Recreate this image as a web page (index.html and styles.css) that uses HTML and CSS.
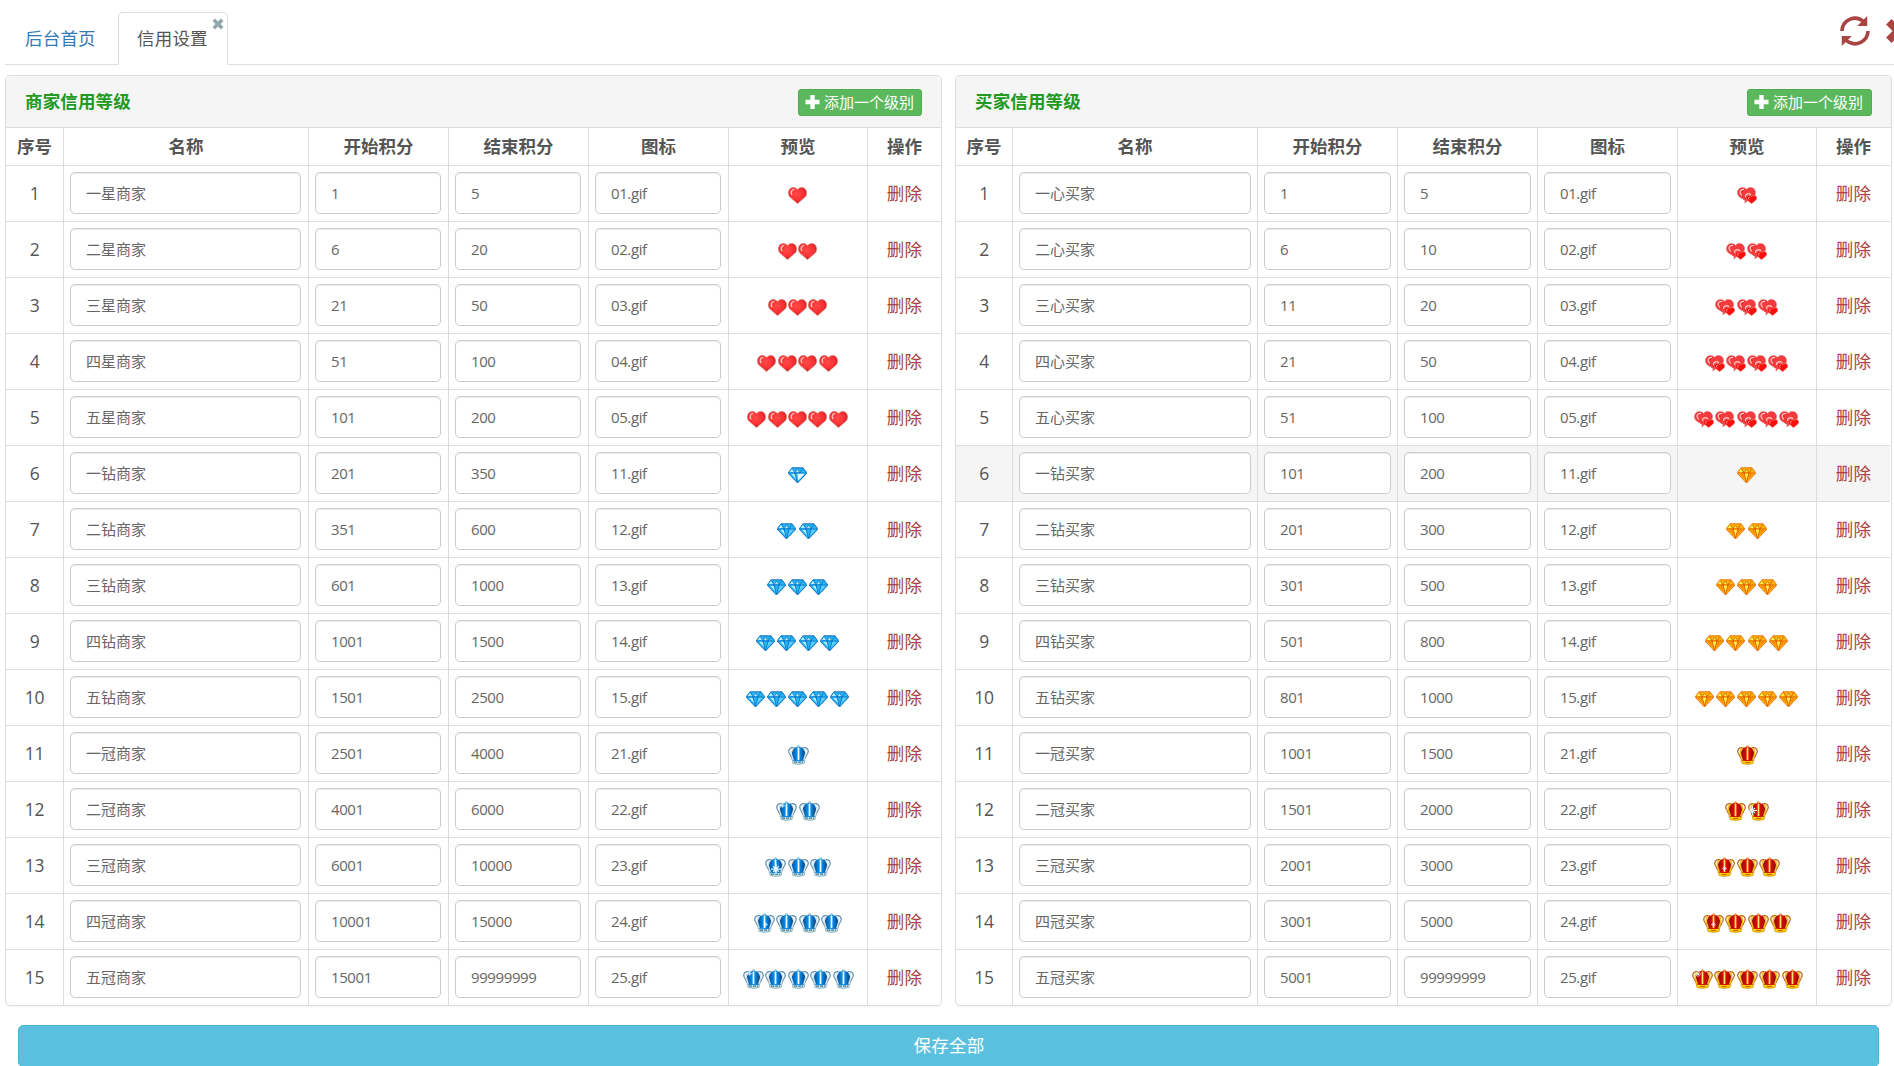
FILE: index.html
```html
<!DOCTYPE html>
<html lang="zh-CN">
<head>
<meta charset="utf-8">
<title>信用设置</title>
<link rel="stylesheet" href="styles.css">
</head>
<body>
<svg class="sprites" aria-hidden="true">
  <defs>
    <radialGradient id="heartFill" cx=".45" cy=".4" r=".6"><stop offset="0" stop-color="#ff4a4a"/><stop offset=".65" stop-color="#fa3131"/><stop offset="1" stop-color="#c81e22"/></radialGradient>
    <linearGradient id="blueBand" x1="0" x2="1" y1="0" y2="0"><stop offset="0" stop-color="#054d92"/><stop offset=".5" stop-color="#0c9fff"/><stop offset="1" stop-color="#033f80"/></linearGradient>
    <linearGradient id="redBand" x1="0" x2="1" y1="0" y2="0"><stop offset="0" stop-color="#8f0600"/><stop offset=".5" stop-color="#e8120c"/><stop offset="1" stop-color="#930500"/></linearGradient>
    <symbol id="heart" viewBox="0 0 19 17">
      <path d="M9.500 16.500 2 10C-.8 7 .3 1 5 .6c2.200-.1 3.700.9 4.500 2.300C10.300 1.500 11.800.5 14 .6c4.700.4 5.800 6.400 3 9.400z" fill="url(#heartFill)" stroke="#d96a66" stroke-width=".7"/>
      <path d="M5.800 2.600C3.400 2.700 2.600 5.300 3.700 7.600" fill="none" stroke="#ffc9c2" stroke-width="1.400" stroke-linecap="round"/>
    </symbol>
    <symbol id="hearts" viewBox="0 0 20 17">
      <path d="M9.500 14.500 2 9.500C-.8 6.500.3 1 5 .6c2-.1 3.800.9 4.600 2C10.500 1 12 .4 14 .6c4.500.4 5.600 5.400 3.500 8.400z" fill="#f33a3c" stroke="#e06060" stroke-width=".5"/>
      <path d="M6.500 2.400C3 2.400 1.900 5.500 4.400 8M8.500 9.500c0-3 3.500-3.400 5.200-1.900" fill="none" stroke="#ffd0cc" stroke-width="1.200" stroke-linecap="round"/>
      <path d="M14.600 16.800 10.200 13c-1.900-2.100-.1-5 2.300-4.500 1 .2 1.700.8 2.100 1.500.5-.8 1.400-1.500 2.500-1.500 2.600 0 3.500 2.700 1.900 4.500z" fill="#fa0d0d" stroke="#ff9c98" stroke-width=".4"/>
      <path d="M12.700 10.200c-1.400 0-1.500 1.500-.7 2.300" fill="none" stroke="#ffd0cc" stroke-width=".8"/>
      <path d="m8 15.800.6-1.500" stroke="#e83030" stroke-width="1.200"/>
    </symbol>
    <symbol id="blueDiamond" viewBox="0 0 19 17">
      <path d="M4 .8h11L18.500 5.500v1L9.500 16 .5 6.500v-1z" fill="#27b4f8" stroke="#1674bd" stroke-width="1"/>
      <path d="M4 1.700 6.500 5H1.800zM9.500 1.700 11.700 5H7.300zM3 6.800h3.500l2 5.700z" fill="#b9f0ff"/>
      <path d="M12.800 6.800h3.700L10.800 12.800z" fill="#65d4ff"/>
      <path d="M1 6h17M4.500 1.500l2.500 4.500L9.500 15 12 6l2.500-4.500M7 6l2.500-4L12 6" fill="none" stroke="#0868b8" stroke-width=".7"/>
    </symbol>
    <symbol id="paleDiamond" viewBox="0 0 19 17">
      <use href="#blueDiamond"/>
      <path d="M9.500 6.800h7L10 13.800z" fill="#eefaff"/>
    </symbol>
    <symbol id="goldDiamond" viewBox="0 0 19 17">
      <path d="M4 .8h11L18.500 5.500v1L9.500 16 .5 6.500v-1z" fill="#ffb800" stroke="#e87416" stroke-width="1"/>
      <path d="M4 1.700 6.500 5H1.800zM9.500 1.700 11.700 5H7.300zM7.500 6.800h4l-2 6.500z" fill="#fff04a"/>
      <path d="M2.500 6.800 6.200 7l2.200 6zM16.500 6.800 12.800 7l-2.200 6z" fill="#fb8a08"/>
      <path d="M1 6h17M4.500 1.500l2.500 4.500L9.500 15 12 6l2.500-4.500M7 6l2.500-4L12 6" fill="none" stroke="#cf4308" stroke-width=".7"/>
    </symbol>
    <symbol id="blueCrown" viewBox="0 0 21 20">
      <path d="M4 14.500h13l-1 4q-5.500 1.800-11 0z" fill="#c4dde5" stroke="#6b98aa" stroke-width=".6"/>
      <path d="M5 15.500Q2 8.500 6 3L10.500 1.500 15 3q4 5.500 1 12.500-5.500 1-11 0z" fill="url(#blueBand)"/>
      <path d="M4.300 14 2.500 10.500Q-.6 6.500 1.800 3.700 4 1.800 6.500 3M16.700 14l1.800-3.500q3.100-4 .7-6.800Q17 1.800 14.500 3" fill="none" stroke="#5c8dab" stroke-width="1.200"/>
      <path d="M5.500 3.200Q2.200 5.500 3.800 10.500l1.400 4.500M15.500 3.200q3.300 2.300 1.700 7.300L15.800 15" fill="none" stroke="#d2e5ec" stroke-width="1.400"/>
      <path d="M8.500 2.200 10.500.6l2 1.600" stroke="#7fa9bd" fill="none"/>
      <path d="M10.500 2.500V15" stroke="#f2fcff" stroke-width="1.700"/>
      <path d="M6 17.200h9" stroke="#3b7d9e" stroke-width="1.200" stroke-dasharray="3 1"/>
    </symbol>
    <symbol id="goldCrown" viewBox="0 0 21 20">
      <path d="M4 14.500h13l-1 4q-5.500 1.800-11 0z" fill="#ffd200" stroke="#c07a08" stroke-width=".6"/>
      <path d="M5 15.500Q2 8.500 6 3L10.500 1.500 15 3q4 5.500 1 12.500-5.500 1-11 0z" fill="url(#redBand)"/>
      <path d="M4.300 14 2.500 10.500Q-.6 6.500 1.800 3.700 4 1.800 6.500 3M16.700 14l1.800-3.500q3.100-4 .7-6.800Q17 1.800 14.500 3" fill="none" stroke="#c0600f" stroke-width="1.200"/>
      <path d="M5.500 3.200Q2.200 5.500 3.800 10.500l1.400 4.500M15.500 3.200q3.300 2.300 1.700 7.300L15.800 15" fill="none" stroke="#f7bd18" stroke-width="1.500"/>
      <path d="M8.500 2.200 10.500.6l2 1.600" stroke="#e08a10" fill="none"/>
      <path d="M10.500 2.500V15" stroke="#ffe56b" stroke-width="1.700"/>
      <path d="M8 17.500h5" stroke="#d26a08" stroke-width="1.200"/>
    </symbol>
    <symbol id="sparkle" viewBox="0 0 8 8"><path d="M4 0v8M0 4h8M1.700 1.700l4.600 4.600M6.300 1.700 1.700 6.300" stroke="#e8f6ff" stroke-width="1"/></symbol>
    <symbol id="plus" viewBox="0 0 14 14"><path d="M4.800 0h4.400v4.800H14v4.400H9.200V14H4.800V9.200H0V4.800h4.800z" fill="currentColor"/></symbol>
    <symbol id="cross" viewBox="0 0 12 12"><path d="M3 .5 6 3.500l3-3L11.500 3l-3 3 3 3L9 11.500l-3-3-3 3L.5 9l3-3-3-3z" fill="currentColor"/></symbol>
    <symbol id="refresh" viewBox="0 0 30 30">
      <path d="M2 15A13 13 0 0 1 23.500 5.500M28 15A13 13 0 0 1 6.500 24.500" fill="none" stroke="currentColor" stroke-width="3.600"/>
      <path d="M27.200 0v10H17.200zM1.800 30V20h10z" fill="currentColor"/>
    </symbol>
  </defs>
</svg>
<nav class="tabs">
  <a class="tab">后台首页</a>
  <a class="tab tab-active">信用设置<svg class="tab-close"><use href="#cross"/></svg></a>
  <div class="tools">
    <svg class="tool-refresh"><use href="#refresh"/></svg>
    <svg class="tool-close"><use href="#cross"/></svg>
  </div>
</nav>
<main class="panels">
  <section class="panel">
    <header class="panel-head"><h2>商家信用等级</h2><button class="add"><svg><use href="#plus"/></svg>添加一个级别</button></header>
    <table class="levels" id="seller"></table>
  </section>
  <section class="panel buyer">
    <header class="panel-head"><h2>买家信用等级</h2><button class="add"><svg><use href="#plus"/></svg>添加一个级别</button></header>
    <table class="levels" id="buyer"></table>
  </section>
</main>
<button class="save">保存全部</button>
<script src="app.js"></script>
</body>
</html>
```
FILE: styles.css
```css
* { box-sizing: border-box; }
html, body { overflow: hidden; }
body {
  margin: 0;
  height: 1066px;
  padding: 12px 0 0 5px;
  background: #fff;
  color: #555;
  font: 17.5px/25px "Open Sans", "Noto Sans CJK SC", sans-serif;
}
button, input { font-family: inherit; }
.sprites { position: absolute; width: 0; height: 0; }

.tabs { display: flex; height: 53px; border-bottom: 1px solid #ddd; }
.tab { position: relative; width: 110px; height: 53px; padding: 14px 0 0 20px; color: #337ab7; letter-spacing: .2px; white-space: nowrap; }
.tab-active {
  margin-left: 3px;
  padding: 13px 0 0 18px;
  border: 1px solid #ddd;
  border-bottom-color: #fff;
  border-radius: 5px 5px 0 0;
  background: #fff;
  color: #555;
}
.tab-close { position: absolute; top: 5px; right: 3px; width: 12px; height: 12px; color: #91a5ae; }
.tools { display: flex; flex: none; gap: 15px; margin-left: auto; margin-right: -17px; padding-top: 4px; color: #a94442; }
.tool-refresh { width: 30px; height: 30px; }
.tool-close { width: 26px; height: 26px; margin-top: 2px; }

.panels { display: flex; gap: 13px; margin-top: 10px; }
.panel { width: 937px; flex: none; border: 1px solid #ddd; border-radius: 5px; box-shadow: 0 1px 1px rgba(0,0,0,.05); }
.panel-head {
  display: flex;
  align-items: center;
  justify-content: space-between;
  height: 52px;
  padding: 1px 19px 0 19px;
  border-bottom: 1px solid #ddd;
  border-radius: 4px 4px 0 0;
  background: #f5f5f5;
}
.panel-head h2 { margin: 0 0 1px; color: #229a22; font-size: 17.5px; font-weight: bold; line-height: 25px; letter-spacing: .15px; }
.add {
  display: flex;
  align-items: center;
  gap: 4px;
  width: 124px;
  height: 27px;
  padding: 0 6px;
  border: 1px solid #4cae4c;
  border-radius: 3px;
  background: #5cb85c;
  color: #fff;
  font-size: 15px;
  line-height: 22px;
  white-space: nowrap;
}
.buyer .add { width: 125px; }
.add svg { width: 15px; height: 14px; flex: none; }

.levels { width: 935px; table-layout: fixed; border-collapse: separate; border-spacing: 0; }
.buyer .levels { width: 934px; }
.levels th, .levels td { padding: 0; border: solid #ddd; border-width: 0 1px 1px 0; text-align: center; vertical-align: middle; }
.levels th:last-child, .levels td:last-child { border-right: 0; }
.levels th { height: 38px; font-weight: bold; }
.levels td { height: 56px; letter-spacing: -.3px; }
.levels td:last-child { letter-spacing: .2px; }
.levels tr:last-child td { height: 55px; border-bottom: 0; }
.levels tr.hover td { background: #f5f5f5; }
.levels td.field { padding: 6px 7px 7px 6px; }
.c-no { width: 58px; }
.buyer .c-no { width: 57px; }
.c-name { width: 245px; }
.c-num { width: 140px; }
.c-preview { width: 139px; }
.buyer td.field { padding-right: 6px; }
.field input {
  display: block;
  width: 100%;
  height: 42px;
  padding: 0 15px 1px;
  border: 1px solid #ccc;
  border-radius: 5px;
  background: #fff;
  box-shadow: inset 0 1px 1px rgba(0,0,0,.075);
  color: #666;
  font-size: 15px;
  letter-spacing: -.4px;
}
.field.name input { letter-spacing: 0; }
.delete { color: #a94442; }
.marks { display: flex; justify-content: center; padding: 4px 1px 0 0; }
.marks svg { flex: none; height: 17px; }
.marks.heart { gap: 1.400px; }
.marks.heart svg { width: 19px; }
.marks.hearts { gap: 1.200px; }
.marks.hearts svg { width: 20px; }
.marks.diamond { gap: 2.200px; }
.marks.diamond svg { width: 19px; }
.marks.crown { gap: 1.500px; padding: 3px 0 0; }
.marks.crown svg { width: 21px; height: 20px; }

.save {
  display: block;
  width: 1861px;
  height: 42px;
  margin: 19px 0 0 13px;
  padding: 0 0 3px 1px;
  border: 1px solid #46b8da;
  border-radius: 5px;
  background: #5bc0de;
  color: #fff;
  font-size: 17.5px;
  letter-spacing: .2px;
}
```
FILE: app.js
```js
const digits = ["一", "二", "三", "四", "五"];
const ends = {
  seller: [5, 20, 50, 100, 200, 350, 600, 1000, 1500, 2500, 4000, 6000, 10000, 15000, 99999999],
  buyer: [5, 10, 20, 50, 100, 200, 300, 500, 800, 1000, 1500, 2000, 3000, 5000, 99999999]
};
const kinds = {
  seller: { suffix: "商家", names: ["星", "钻", "冠"], layout: ["heart", "diamond", "crown"], icons: ["heart", "blueDiamond", "blueCrown"] },
  buyer: { suffix: "买家", names: ["心", "钻", "冠"], layout: ["hearts", "diamond", "crown"], icons: ["hearts", "goldDiamond", "goldCrown"] }
};
// Glints on the crowns: row index -> [crown index, x, y, size]
const glints = {
  seller: { 11: [0, 4, 2, 5], 12: [0, 6, 7, 10], 13: [0, 9, 9, 5], 14: [0, 4, 2, 5] },
  buyer: { 11: [1, 0, 5, 9], 12: [0, 8, 9, 5], 13: [0, 8, 9, 5], 14: [0, 3, 2, 6] }
};
const field = (value, extra = "") => `<td class="field ${extra}"><input value="${value}"></td>`;

for (const id of ["seller", "buyer"]) {
  const kind = kinds[id];
  let html = '<colgroup><col class="c-no"><col class="c-name"><col class="c-num"><col class="c-num"><col class="c-num"><col class="c-preview"><col></colgroup>' +
    "<tr><th>" + ["序号", "名称", "开始积分", "结束积分", "图标", "预览", "操作"].join("</th><th>") + "</th></tr>";
  ends[id].forEach((end, i) => {
    const group = Math.floor(i / 5);
    const n = i % 5 + 1;
    const icon = id === "seller" && i === 5 ? "paleDiamond" : kind.icons[group];
    const start = i ? ends[id][i - 1] + 1 : 1;
    const glint = glints[id][i];
    let marks = "";
    for (let k = 0; k < n; k++) {
      const shine = glint && glint[0] === k
        ? `<use href="#sparkle" x="${glint[1]}" y="${glint[2]}" width="${glint[3]}" height="${glint[3]}"/>` : "";
      marks += `<svg><use href="#${icon}"/>${shine}</svg>`;
    }
    html += `<tr${id === "buyer" && i === 5 ? ' class="hover"' : ""}><td>${i + 1}</td>` +
      field(digits[n - 1] + kind.names[group] + kind.suffix, "name") + field(start) + field(end) + field(`${group}${n}.gif`) +
      `<td><div class="marks ${kind.layout[group]}">${marks}</div></td>` +
      '<td><a class="delete">删除</a></td></tr>';
  });
  document.getElementById(id).innerHTML = html;
}
```
